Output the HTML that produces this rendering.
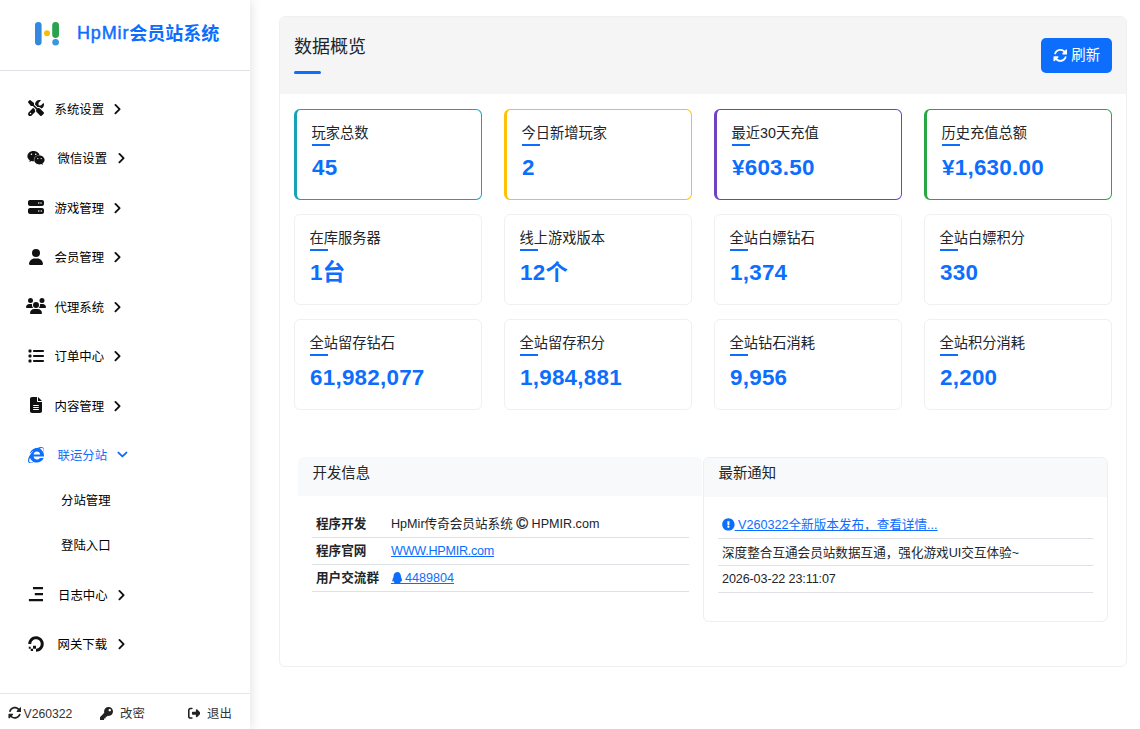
<!DOCTYPE html>
<html lang="zh-CN">
<head>
<meta charset="utf-8">
<title>HpMir会员站系统</title>
<style>
*{box-sizing:border-box;margin:0;padding:0}
html,body{width:1140px;height:729px;overflow:hidden;background:#fff}
body{font-family:"Liberation Sans","Noto Sans CJK SC",sans-serif;color:#212529;position:relative;font-size:14.4px}
a{color:#0d6efd;text-decoration:underline}
.abs{position:absolute}
.t{position:absolute;white-space:nowrap;line-height:20px;height:20px}
/* sidebar */
#side{position:absolute;left:0;top:0;width:250px;height:729px;background:#fff;box-shadow:2px 0 10px rgba(0,0,0,.10);z-index:2}
#side .hd{position:absolute;left:0;top:0;width:250px;height:71px;border-bottom:1px solid #dee2e6}
#side .brand{left:77px;top:22px;font-size:18px;font-weight:700;color:#0d6efd;line-height:22px;height:22px}
.mi{font-size:12.4px;color:#000;font-weight:400;margin-top:1px}
.mi.on{color:#0d6efd}
.ic{position:absolute;display:block}
.chev path{fill:none;stroke:#111;stroke-width:1.9;stroke-linecap:round;stroke-linejoin:round}
.chev.on path{stroke:#0d6efd}
#side .ft{position:absolute;left:0;top:693px;width:250px;height:36px;border-top:1px solid #e6e6e6}
.fti{font-size:12.6px;color:#333}
/* main */
#card{position:absolute;left:279px;top:16px;width:848px;height:651px;border:1px solid #f0f0f0;border-radius:6px;background:#fff;overflow:hidden}
#card .hd{position:absolute;left:0;top:0;width:100%;height:77px;background:#f5f5f5}
.h1{left:294px;top:36.5px;font-size:18px;color:#212529}
.bar{position:absolute;background:#0d6efd;border-radius:2px}
.btn{position:absolute;left:1041px;top:38px;width:71px;height:35px;border-radius:5px;background:#0d6efd;color:#fff}
.sc{position:absolute;width:188px;height:91px;border:1px solid #f0f0f0;border-radius:6px;background:#fff}
.sc .l{position:absolute;left:14.6px;top:12.8px;font-size:14.25px;line-height:20px;white-space:nowrap;color:#212529}
.sc .u{position:absolute;left:14.5px;top:34px;width:18px;height:2px;background:#0d6efd}
.sc .n{position:absolute;left:15px;top:44.3px;font-size:22.4px;letter-spacing:.25px;font-weight:700;line-height:28px;color:#0d6efd;white-space:nowrap;font-family:"Liberation Sans","Noto Sans CJK SC",sans-serif}
.sc.c{border-left-width:3px}

.ph{position:absolute;background:#f8f9fa;height:39px}
.pt{font-size:14.4px;color:#212529}
.row{position:absolute;height:1px;background:#dee2e6}
.tb{font-size:12.6px;color:#212529}
.tb b{font-weight:700}
</style>
</head>
<body>
<div id="side">
  <div class="hd"></div>
  <svg class="ic" style="left:34px;top:21px" width="28" height="26" viewBox="0 0 28 26">
    <rect x="1" y="1" width="6.6" height="23.4" rx="3.3" fill="#3388e0"/>
    <circle cx="13" cy="12.3" r="3" fill="#fbbc05"/>
    <rect x="18.2" y="1" width="6.8" height="16" rx="3.4" fill="#2ba24c"/>
    <circle cx="21.6" cy="21.2" r="3.3" fill="#3b96dc"/>
  </svg>
  <div class="t brand"><span style="font-weight:400;-webkit-text-stroke:.45px #0d6efd;letter-spacing:.85px">HpMir</span><span style="position:relative;top:.6px">会员站系统</span></div>

  <div class="t mi" style="left:54.5px;top:99px">系统设置</div>
  <div class="t mi" style="left:57.5px;top:148px">微信设置</div>
  <div class="t mi" style="left:54.5px;top:198px">游戏管理</div>
  <div class="t mi" style="left:54.5px;top:247px">会员管理</div>
  <div class="t mi" style="left:54.5px;top:297px">代理系统</div>
  <div class="t mi" style="left:54.5px;top:346px">订单中心</div>
  <div class="t mi" style="left:54.5px;top:396px">内容管理</div>
  <div class="t mi on" style="left:57.5px;top:445px">联运分站</div>
  <div class="t mi" style="left:61px;top:490px">分站管理</div>
  <div class="t mi" style="left:61px;top:535px">登陆入口</div>
  <div class="t mi" style="left:58px;top:585px">日志中心</div>
  <div class="t mi" style="left:57.5px;top:634px">网关下载</div>


  <svg class="ic" style="left:28px;top:100px" width="16.00" height="16.00" viewBox="0 0 512 512"><path fill="#111" d="M78.600 5C69.100-2.400 55.600-1.500 47 7L7 47c-8.500 8.500-9.400 22-2.100 31.600l80 104c4.500 5.900 11.600 9.400 19 9.400h54.100l109 109c-14.700 29-10 65.400 14.300 89.600l112 112c12.500 12.500 32.800 12.500 45.300 0l64-64c12.500-12.500 12.500-32.800 0-45.300l-112-112c-24.200-24.200-60.600-29-89.600-14.300l-109-109V104c0-7.500-3.500-14.500-9.400-19L78.600 5zM19.900 396.100C7.200 408.800 0 426.100 0 444.100C0 481.600 30.400 512 67.900 512c18 0 35.300-7.200 48-19.900L233.700 374.300c-7.800-20.900-9.800-43.600-5.800-65.700l-61.700-61.700L19.900 396.100zM512 144c0-10.500-1.100-20.700-3.200-30.500c-2.400-11.200-16.100-14.100-24.200-6l-63.900 63.900c-3 3-7.100 4.700-11.300 4.700H352c-8.800 0-16-7.200-16-16V102.600c0-4.200 1.700-8.300 4.700-11.300l63.900-63.900c8.100-8.100 5.200-21.800-6-24.200C388.700 1.100 378.500 0 368 0C288.500 0 224 64.500 224 144l0 .8 85.300 85.300c36-9.100 75.800 .5 104 28.700L429 274.500c49-23 83-72.800 83-130.500zM56 432a24 24 0 1 1 48 0 24 24 0 1 1 -48 0z"/></svg>
  <svg class="ic" style="left:26.8px;top:149.5px" width="18.00" height="16.00" viewBox="0 0 576 512"><path fill="#111" d="M385.2 167.600c6.400 0 12.600.3 18.800 1.100C387.400 90.300 303.300 32 207.700 32 100.500 32 13 104.800 13 197.400c0 53.400 29.300 97.500 77.900 131.600l-19.300 58.600 68-34.100c24.400 4.800 43.800 9.700 68.200 9.700 6.200 0 12.100-.3 18.300-.8-4-12.900-6.200-26.600-6.200-40.800-.1-84.900 72.900-154 165.300-154zm-104.500-52.900c14.500 0 24.200 9.700 24.200 24.400 0 14.500-9.700 24.200-24.200 24.200-14.800 0-29.300-9.700-29.300-24.200.1-14.700 14.600-24.400 29.300-24.400zm-136.400 48.600c-14.500 0-29.300-9.700-29.300-24.200 0-14.800 14.800-24.400 29.300-24.400 14.800 0 24.400 9.700 24.400 24.400 0 14.600-9.600 24.200-24.400 24.200zM563 319.400c0-77.900-77.900-141.300-165.400-141.300-92.700 0-165.400 63.400-165.400 141.300S305 460.700 397.600 460.700c19.300 0 38.900-5.100 58.600-9.900l53.400 29.300-14.800-48.600C534 402.100 563 363.200 563 319.400zm-219.100-24.500c-9.700 0-19.300-9.700-19.300-19.600 0-9.700 9.700-19.300 19.300-19.300 14.800 0 24.400 9.700 24.400 19.300 0 10-9.700 19.600-24.400 19.600zm107.100 0c-9.700 0-19.300-9.700-19.300-19.600 0-9.700 9.700-19.300 19.300-19.300 14.500 0 24.400 9.700 24.400 19.300.1 10-9.900 19.600-24.400 19.600z"/></svg>
  <svg class="ic" style="left:28px;top:199px" width="16.00" height="16.00" viewBox="0 0 512 512"><path fill="#111" d="M64 32C28.7 32 0 60.7 0 96v64c0 35.300 28.700 64 64 64H448c35.300 0 64-28.700 64-64V96c0-35.300-28.700-64-64-64H64zm280 72a24 24 0 1 1 0 48 24 24 0 1 1 0-48zm48 24a24 24 0 1 1 48 0 24 24 0 1 1 -48 0zM64 288c-35.300 0-64 28.700-64 64v64c0 35.300 28.700 64 64 64H448c35.300 0 64-28.700 64-64V352c0-35.300-28.700-64-64-64H64zm280 72a24 24 0 1 1 0 48 24 24 0 1 1 0-48zm56 24a24 24 0 1 1 48 0 24 24 0 1 1 -48 0z"/></svg>
  <svg class="ic" style="left:29px;top:249px" width="14.00" height="16.00" viewBox="0 0 448 512"><path fill="#111" d="M224 256A128 128 0 1 0 224 0a128 128 0 1 0 0 256zm-45.700 48C79.800 304 0 383.800 0 482.300C0 498.700 13.300 512 29.700 512H418.300c16.400 0 29.700-13.300 29.700-29.700C448 383.800 368.200 304 269.700 304H178.300z"/></svg>
  <svg class="ic" style="left:26px;top:298px" width="20.00" height="16.00" viewBox="0 0 640 512"><path fill="#111" d="M144 0a80 80 0 1 1 0 160A80 80 0 1 1 144 0zM512 0a80 80 0 1 1 0 160A80 80 0 1 1 512 0zM0 298.700C0 239.800 47.800 192 106.700 192h42.700c15.900 0 31 3.500 44.600 9.700c-1.300 7.200-1.900 14.700-1.900 22.300c0 38.200 16.800 72.500 43.300 96c-.2 0-.4 0-.7 0H21.300C9.600 320 0 310.400 0 298.700zM405.300 320c-.2 0-.4 0-.7 0c26.600-23.500 43.300-57.800 43.300-96c0-7.600-.7-15-1.900-22.300c13.600-6.300 28.700-9.700 44.600-9.700h42.700C592.200 192 640 239.800 640 298.700c0 11.800-9.600 21.300-21.300 21.300H405.300zM224 224a96 96 0 1 1 192 0 96 96 0 1 1 -192 0zM128 485.300C128 411.700 187.700 352 261.300 352H378.700C452.300 352 512 411.700 512 485.300c0 14.700-11.900 26.700-26.700 26.700H154.700c-14.700 0-26.700-11.900-26.700-26.700z"/></svg>
  <svg class="ic" style="left:28px;top:348px" width="16.00" height="16.00" viewBox="0 0 512 512"><path fill="#111" d="M40 48C26.700 48 16 58.700 16 72v48c0 13.300 10.700 24 24 24H88c13.300 0 24-10.700 24-24V72c0-13.300-10.700-24-24-24H40zM192 64c-17.700 0-32 14.300-32 32s14.300 32 32 32H480c17.700 0 32-14.300 32-32s-14.300-32-32-32H192zm0 160c-17.700 0-32 14.300-32 32s14.300 32 32 32H480c17.700 0 32-14.300 32-32s-14.300-32-32-32H192zm0 160c-17.700 0-32 14.300-32 32s14.300 32 32 32H480c17.700 0 32-14.300 32-32s-14.300-32-32-32H192zM16 232v48c0 13.300 10.700 24 24 24H88c13.300 0 24-10.700 24-24V232c0-13.300-10.700-24-24-24H40c-13.300 0-24 10.700-24 24zM40 368c-13.300 0-24 10.700-24 24v48c0 13.300 10.700 24 24 24H88c13.300 0 24-10.700 24-24V392c0-13.300-10.700-24-24-24H40z"/></svg>
  <svg class="ic" style="left:30px;top:397px" width="12.00" height="16.00" viewBox="0 0 384 512"><path fill="#111" d="M64 0C28.700 0 0 28.700 0 64V448c0 35.300 28.700 64 64 64H320c35.300 0 64-28.700 64-64V160H256c-17.700 0-32-14.300-32-32V0H64zM256 0V128H384L256 0zM112 256H272c8.800 0 16 7.200 16 16s-7.200 16-16 16H112c-8.800 0-16-7.200-16-16s7.200-16 16-16zm0 64H272c8.800 0 16 7.200 16 16s-7.200 16-16 16H112c-8.800 0-16-7.200-16-16s7.200-16 16-16zm0 64H272c8.800 0 16 7.200 16 16s-7.200 16-16 16H112c-8.800 0-16-7.200-16-16s7.200-16 16-16z"/></svg>
  <svg class="ic" style="left:28px;top:447px" width="16.00" height="16.00" viewBox="0 0 512 512"><path fill="#0d6efd" d="M483.049 159.706c10.855-24.575 21.424-60.438 21.424-87.871 0-72.722-79.641-98.371-209.673-38.577-107.632-7.181-211.221 73.67-237.098 186.457 30.852-34.862 78.271-82.298 121.977-101.158C125.404 166.85 79.128 228.002 43.992 291.725 23.246 329.651 0 390.94 0 436.747c0 98.575 92.854 86.5 180.251 42.006 31.423 15.43 66.559 15.573 101.695 15.573 97.124 0 184.249-54.294 216.814-146.022H377.927c-52.509 88.593-196.819 52.996-196.819-47.436H509.900c6.407-43.581-1.655-95.715-26.851-141.162zM64.559 346.877c17.711 51.15 53.703 95.871 100.266 123.304-88.741 48.94-173.267 29.096-100.266-123.304zm115.977-108.873c2-55.151 50.276-94.871 103.98-94.871 53.418 0 101.981 39.72 103.981 94.871H180.536zm184.536-187.6c21.425-10.287 48.563-22.003 72.558-22.003 31.422 0 54.274 21.717 54.274 53.722 0 20.003-7.427 49.007-14.569 67.867-26.28-42.292-65.986-81.584-112.263-99.586z"/></svg>
  <svg class="ic" style="left:28px;top:586px" width="16" height="16" viewBox="0 0 16 16"><path fill="#111" d="M5 .9h10v2.3H5zM6.800 6.900h8.200v2.300H6.800zM.9 12.900h14.100v2.300H.9z"/></svg>
  <svg class="ic" style="left:28px;top:636px" width="16.00" height="16.00" viewBox="0 0 512 512"><path fill="#111" d="M87 481.800h73.700v-73.600H87zM25.400 346.600v61.600H87v-61.600zm466.200-169.700c-23-74.200-82.400-133.300-156.600-156.600C164.900-32.800 8 93.700 8 255.900h95.800c0-101.800 101-180.500 208.100-141.700 39.700 14.300 71.500 46.100 85.800 85.700 39.100 107-39.700 207.800-141.400 208v.3h-.3V504c162.600 0 288.800-156.800 235.600-327.100zm-235.300 231.300v-95.300h-95.600v95.600H256v-.3z"/></svg>
  <svg class="ic chev" style="left:112px;top:102px" width="12" height="14" viewBox="0 0 12 14"><path d="M3.4 2.9L7.6 7.1L3.4 11.3"/></svg>
  <svg class="ic chev" style="left:116px;top:151px" width="12" height="14" viewBox="0 0 12 14"><path d="M3.4 2.9L7.6 7.1L3.4 11.3"/></svg>
  <svg class="ic chev" style="left:112px;top:201px" width="12" height="14" viewBox="0 0 12 14"><path d="M3.4 2.9L7.6 7.1L3.4 11.3"/></svg>
  <svg class="ic chev" style="left:112px;top:250px" width="12" height="14" viewBox="0 0 12 14"><path d="M3.4 2.9L7.6 7.1L3.4 11.3"/></svg>
  <svg class="ic chev" style="left:112px;top:300px" width="12" height="14" viewBox="0 0 12 14"><path d="M3.4 2.9L7.6 7.1L3.4 11.3"/></svg>
  <svg class="ic chev" style="left:112px;top:349px" width="12" height="14" viewBox="0 0 12 14"><path d="M3.4 2.9L7.6 7.1L3.4 11.3"/></svg>
  <svg class="ic chev" style="left:112px;top:399px" width="12" height="14" viewBox="0 0 12 14"><path d="M3.4 2.9L7.6 7.1L3.4 11.3"/></svg>
  <svg class="ic chev on" style="left:116px;top:448px" width="14" height="14" viewBox="0 0 14 14"><path d="M2.4 4.6L6.4 8.4L10.4 4.6"/></svg>
  <svg class="ic chev" style="left:116px;top:588px" width="12" height="14" viewBox="0 0 12 14"><path d="M3.4 2.9L7.6 7.1L3.4 11.3"/></svg>
  <svg class="ic chev" style="left:116px;top:637px" width="12" height="14" viewBox="0 0 12 14"><path d="M3.4 2.9L7.6 7.1L3.4 11.3"/></svg>

  <div class="ft"></div>
  <svg class="ic" style="left:7.5px;top:706px" width="13.70" height="13.70" viewBox="0 0 512 512"><path fill="#222" d="M142.9 142.9c62.2-62.2 162.7-62.500 225.300-1L327 183c-6.900 6.900-8.900 17.200-5.200 26.200s12.500 14.800 22.200 14.800H463.500c0 0 0 0 0 0H472c13.300 0 24-10.700 24-24V72c0-9.700-5.800-18.500-14.800-22.200s-19.300-1.700-26.200 5.200L413.400 96.600c-87.600-86.500-228.700-86.200-315.800 1C73.200 122 55.600 150.700 44.800 181.400c-5.900 16.700 2.900 34.900 19.500 40.800s34.900-2.900 40.800-19.500c7.700-21.800 20.200-42.300 37.800-59.800zM16 312v7.600 .7V440c0 9.700 5.800 18.500 14.800 22.200s19.300 1.700 26.200-5.200l41.600-41.600c87.600 86.500 228.700 86.200 315.800-1c24.400-24.400 42.100-53.100 52.900-83.700c5.900-16.700-2.900-34.900-19.500-40.800s-34.900 2.900-40.800 19.500c-7.700 21.800-20.200 42.300-37.800 59.800c-62.200 62.200-162.700 62.500-225.300 1L185 329c6.900-6.900 8.900-17.200 5.200-26.200s-12.500-14.800-22.200-14.800H48.400h-.7H40c-13.300 0-24 10.700-24 24z"/></svg>
  <svg class="ic" style="left:100px;top:707px" width="13.00" height="13.00" viewBox="0 0 512 512"><path fill="#222" d="M512 176.001C512 273.203 433.202 352 336 352c-11.220 0-22.190-1.062-32.827-3.069l-24.012 27.014A23.999 23.999 0 0 1 261.223 384H224v40c0 13.255-10.745 24-24 24h-40v40c0 13.255-10.745 24-24 24H24c-13.255 0-24-10.745-24-24v-78.059c0-6.365 2.529-12.470 7.029-16.971l161.802-161.802C163.108 213.814 160 195.271 160 176 160 78.798 238.797.001 335.999 0 433.488-.001 512 78.511 512 176.001zM336 128c0 26.510 21.490 48 48 48s48-21.490 48-48-21.490-48-48-48-48 21.490-48 48z"/></svg>
  <svg class="ic" style="left:187.5px;top:707px" width="12.60" height="12.60" viewBox="0 0 512 512"><path fill="#222" d="M377.900 105.900L500.700 228.700c7.200 7.200 11.300 17.100 11.300 27.300s-4.100 20.100-11.300 27.300L377.900 406.100c-6.400 6.400-15 9.900-24 9.900c-18.700 0-33.900-15.200-33.900-33.900l0-62.100-128 0c-17.700 0-32-14.300-32-32l0-64c0-17.700 14.300-32 32-32l128 0 0-62.100c0-18.700 15.200-33.900 33.900-33.900c9 0 17.600 3.600 24 9.900zM160 96L96 96c-17.700 0-32 14.300-32 32l0 256c0 17.700 14.300 32 32 32l64 0c17.700 0 32 14.300 32 32s-14.300 32-32 32l-64 0c-53 0-96-43-96-96L0 128C0 75 43 32 96 32l64 0c17.700 0 32 14.300 32 32s-14.300 32-32 32z"/></svg>
  <div class="t fti" style="left:23.5px;top:704px;font-size:12.2px">V260322</div>
  <div class="t fti" style="left:120px;top:703.6px;font-size:12.4px">改密</div>
  <div class="t fti" style="left:207px;top:703.6px;font-size:12.4px">退出</div>
</div>

<div id="card"><div class="hd"></div></div>
<div class="t h1">数据概览</div>
<div class="bar" style="left:294px;top:71px;width:27px;height:3px"></div>
<div class="btn"><svg class="ic" style="left:11.7px;top:10.45px" width="14.70" height="14.70" viewBox="0 0 512 512"><path fill="#fff" d="M142.9 142.9c62.2-62.2 162.7-62.500 225.300-1L327 183c-6.900 6.900-8.900 17.200-5.200 26.200s12.500 14.800 22.200 14.800H463.500c0 0 0 0 0 0H472c13.300 0 24-10.700 24-24V72c0-9.700-5.800-18.500-14.800-22.200s-19.300-1.700-26.200 5.200L413.400 96.600c-87.600-86.500-228.700-86.200-315.800 1C73.200 122 55.600 150.700 44.800 181.400c-5.900 16.700 2.900 34.900 19.500 40.800s34.900-2.900 40.800-19.500c7.700-21.800 20.200-42.300 37.800-59.800zM16 312v7.600 .7V440c0 9.700 5.800 18.500 14.800 22.200s19.300 1.700 26.200-5.200l41.600-41.600c87.600 86.500 228.700 86.200 315.800-1c24.400-24.400 42.100-53.100 52.900-83.700c5.900-16.700-2.900-34.900-19.500-40.800s-34.900 2.900-40.800 19.500c-7.700 21.800-20.200 42.300-37.800 59.800c-62.200 62.200-162.700 62.500-225.300 1L185 329c6.900-6.900 8.900-17.200 5.200-26.200s-12.500-14.800-22.200-14.800H48.400h-.7H40c-13.300 0-24 10.700-24 24z"/></svg><div class="t" style="left:30.3px;top:7.3px;font-size:14.4px;color:#fff">刷新</div></div>

<div class="sc c" style="left:294px;top:109px;border-color:#17a2b8"><div class="l">玩家总数</div><div class="u"></div><div class="n">45</div></div>
<div class="sc c" style="left:504px;top:109px;border-color:#ffc107"><div class="l">今日新增玩家</div><div class="u"></div><div class="n">2</div></div>
<div class="sc c" style="left:714px;top:109px;border-color:#6f42c1"><div class="l">最近30天充值</div><div class="u"></div><div class="n">¥603.50</div></div>
<div class="sc c" style="left:924px;top:109px;border-color:#28a745"><div class="l">历史充值总额</div><div class="u"></div><div class="n">¥1,630.00</div></div>

<div class="sc" style="left:294px;top:214px"><div class="l">在库服务器</div><div class="u"></div><div class="n">1台</div></div>
<div class="sc" style="left:504px;top:214px"><div class="l">线上游戏版本</div><div class="u"></div><div class="n">12个</div></div>
<div class="sc" style="left:714px;top:214px"><div class="l">全站白嫖钻石</div><div class="u"></div><div class="n">1,374</div></div>
<div class="sc" style="left:924px;top:214px"><div class="l">全站白嫖积分</div><div class="u"></div><div class="n">330</div></div>

<div class="sc" style="left:294px;top:319px"><div class="l">全站留存钻石</div><div class="u"></div><div class="n">61,982,077</div></div>
<div class="sc" style="left:504px;top:319px"><div class="l">全站留存积分</div><div class="u"></div><div class="n">1,984,881</div></div>
<div class="sc" style="left:714px;top:319px"><div class="l">全站钻石消耗</div><div class="u"></div><div class="n">9,956</div></div>
<div class="sc" style="left:924px;top:319px"><div class="l">全站积分消耗</div><div class="u"></div><div class="n">2,200</div></div>

<div class="ph" style="left:298px;top:457px;width:404px;border-radius:6px 6px 0 0"></div>
<div class="t pt" style="left:312.5px;top:463px">开发信息</div>
<div class="abs" style="left:703px;top:457px;width:405px;height:165px;border:1px solid #eee;border-radius:6px;overflow:hidden"><div class="ph" style="left:0;top:0;width:100%"></div></div>
<div class="t pt" style="left:718.5px;top:463px">最新通知</div>

<div class="t tb" style="left:316px;top:513.7px"><b>程序开发</b></div>
<div class="t tb" style="left:391px;top:513.7px">HpMir传奇会员站系统 <span style="font-size:16px;line-height:0;position:relative;top:1px;-webkit-text-stroke:.3px #212529">©</span> HPMIR.com</div>
<div class="row" style="left:312px;top:537px;width:377px"></div>
<div class="t tb" style="left:316px;top:540.7px"><b>程序官网</b></div>
<div class="t tb" style="left:391px;top:540.7px"><a style="letter-spacing:-.25px">WWW.HPMIR.com</a></div>
<div class="row" style="left:312px;top:564px;width:377px"></div>
<div class="t tb" style="left:316px;top:567.7px"><b>用户交流群</b></div>
<div class="t tb" style="left:391px;top:567.7px"><a>&nbsp;&nbsp;&nbsp; 4489804</a><svg class="ic" style="left:0.8px;top:4.2px" width="10.50" height="12.00" viewBox="0 0 448 512"><path fill="#0d6efd" d="M433.754 420.445c-11.526 1.393-44.860-52.741-44.860-52.741 0 31.345-16.136 72.247-51.051 101.786 16.842 5.192 54.843 19.167 45.803 34.421-7.316 12.343-125.510 7.881-159.632 4.037-34.122 3.844-152.316 8.306-159.632-4.037-9.045-15.250 28.918-29.214 45.783-34.415-34.920-29.539-51.059-70.445-51.059-101.792 0 0-33.334 54.134-44.859 52.741-5.370-.650-12.424-29.644 9.347-99.704 10.261-33.024 21.995-60.478 40.144-105.779C60.683 98.063 108.982.006 224 0c113.737.006 163.156 96.133 160.264 214.963 18.118 45.223 29.912 72.850 40.144 105.778 21.768 70.060 14.716 99.053 9.346 99.704z"/></svg></div>
<div class="row" style="left:312px;top:591px;width:377px"></div>

<div class="t tb" style="left:722px;top:515px"><svg class="ic" style="left:0.3px;top:3.3px" width="12.80" height="12.80" viewBox="0 0 512 512"><path fill="#0d6efd" d="M504 256c0 136.997-111.043 248-248 248S8 392.997 8 256C8 119.083 119.043 8 256 8s248 111.083 248 248zm-248 50c-25.405 0-46 20.595-46 46s20.595 46 46 46 46-20.595 46-46-20.595-46-46-46zm-43.673-165.346l7.418 136c.347 6.364 5.609 11.346 11.982 11.346h48.546c6.373 0 11.635-4.982 11.982-11.346l7.418-136c.375-6.874-5.098-12.654-11.982-12.654h-63.383c-6.884 0-12.356 5.780-11.981 12.654z"/></svg><a style="margin-left:12.6px">&nbsp;V260322全新版本发布，查看详情...</a></div>
<div class="row" style="left:718px;top:538px;width:375px"></div>
<div class="t tb" style="left:722px;top:542.8px">深度整合互通会员站数据互通，强化游戏UI交互体验~</div>
<div class="row" style="left:718px;top:565px;width:375px"></div>
<div class="t tb" style="left:722px;top:569.2px;letter-spacing:-.12px">2026-03-22 23:11:07</div>
<div class="row" style="left:718px;top:592px;width:375px"></div>
</body>
</html>
